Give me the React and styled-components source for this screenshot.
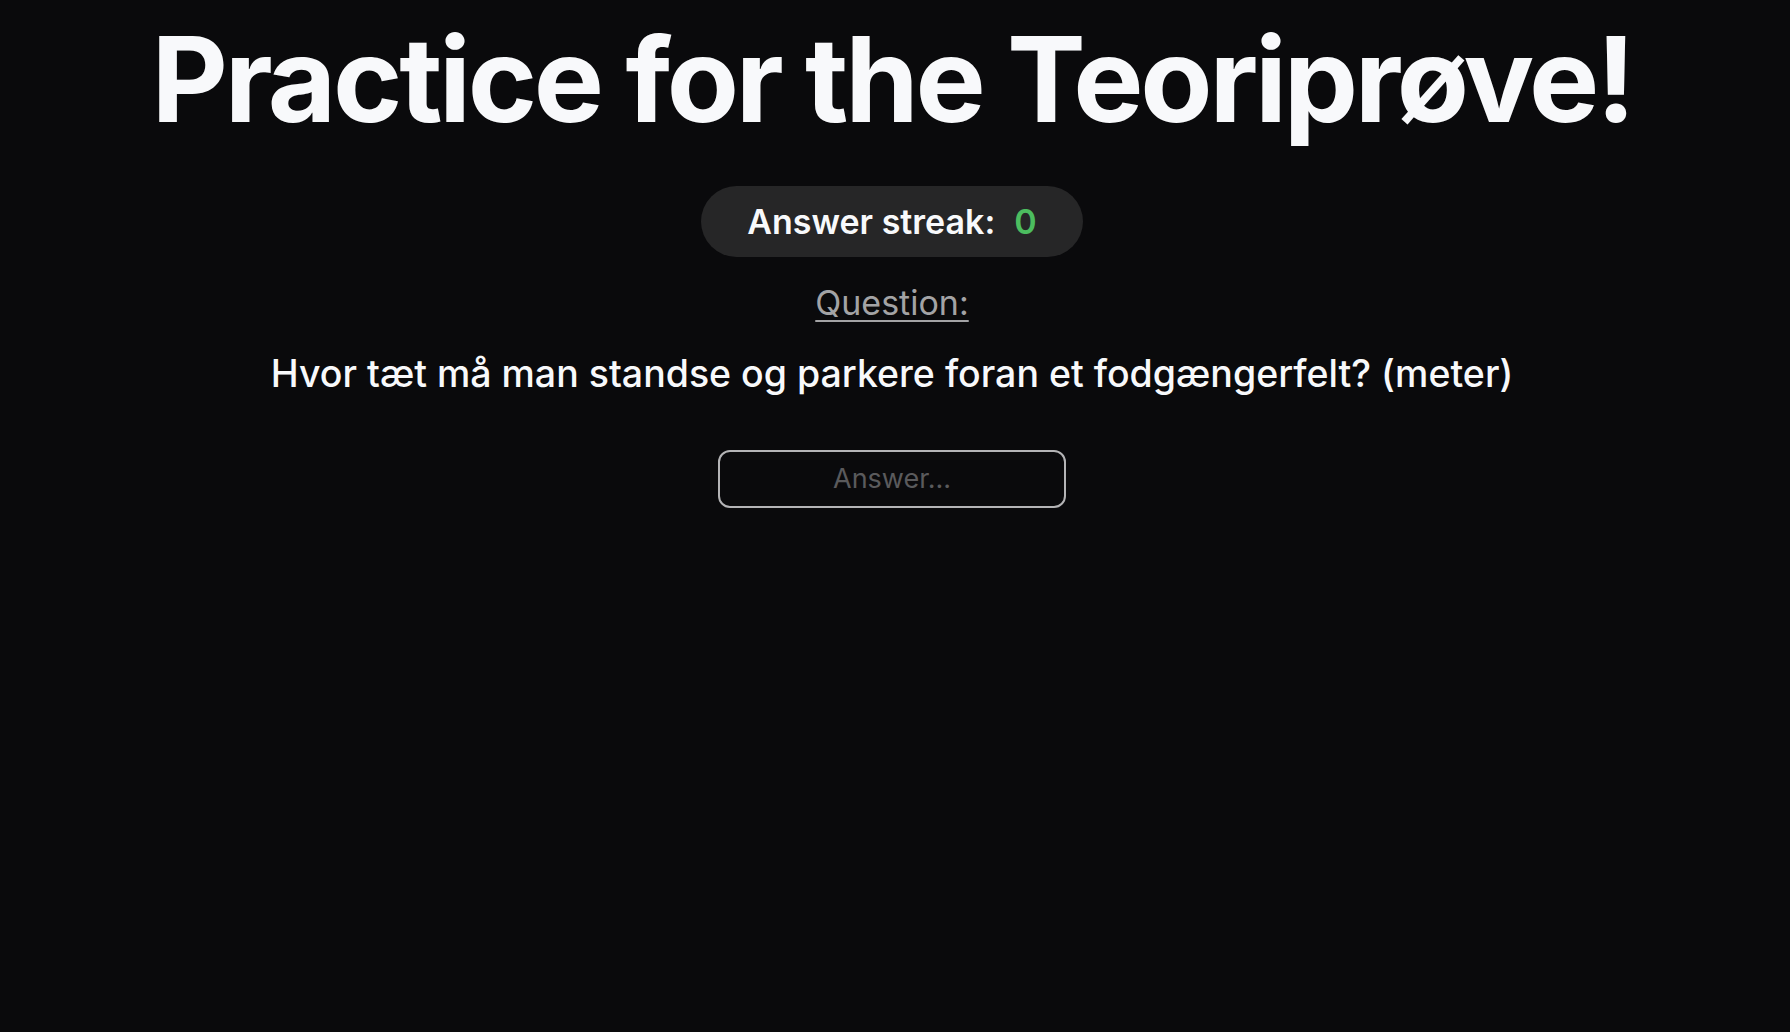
import React, { useState } from "react";
import styled, { createGlobalStyle } from "styled-components";

const GlobalStyle = createGlobalStyle`
  html, body {
    margin: 0;
    padding: 0;
    background: #0a0a0c;
  }
  body {
    font-family: Inter, "Noto Sans", "Liberation Sans", sans-serif;
    color: #f8f9fb;
    min-height: 100vh;
  }
`;

const Page = styled.main`
  display: flex;
  flex-direction: column;
  align-items: center;
  min-height: 100vh;
  padding: 9px 6px 0 0;
  box-sizing: border-box;
`;

const Title = styled.h1`
  margin: 0;
  font-size: 118px;
  font-weight: 700;
  line-height: 1.2;
  letter-spacing: -3.3px;
  color: #f8f9fb;
`;

const StreakPill = styled.div`
  display: flex;
  align-items: center;
  gap: 19px;
  margin-top: 35px;
  padding: 0 46px;
  height: 71px;
  border-radius: 36px;
  background: #262627;
  font-size: 34px;
  font-weight: 600;
`;

const Streak = styled.span`
  color: #4cbd5f;
`;

const Label = styled.h3`
  margin: 25px 0 0;
  font-size: 34px;
  font-weight: 400;
  color: #a3a3a5;
  text-decoration: underline;
  text-underline-offset: 5px;
  text-decoration-thickness: 2px;
`;

const Question = styled.p`
  margin: 28px 0 0;
  font-size: 37.5px;
  font-weight: 500;
  color: #f8f9fb;
`;

const AnswerInput = styled.input`
  margin-top: 54px;
  width: 348px;
  height: 58px;
  box-sizing: border-box;
  border: 2px solid #b4b4b6;
  border-radius: 12px;
  background: transparent;
  color: #f8f9fb;
  font-family: inherit;
  font-size: 27px;
  text-align: center;
  outline: none;

  &::placeholder {
    color: #5a5a5c;
  }
`;

const App = () => {
  const [answer, setAnswer] = useState("");
  const streak = 0;

  return (
    <>
      <GlobalStyle />
      <Page>
        <Title>Practice for the Teoriprøve!</Title>
        <StreakPill>
          <span>Answer streak:</span>
          <Streak>{streak}</Streak>
        </StreakPill>
        <Label>Question:</Label>
        <Question>
          Hvor tæt må man standse og parkere foran et fodgængerfelt? (meter)
        </Question>
        <AnswerInput
          placeholder="Answer..."
          value={answer}
          onChange={(e) => setAnswer(e.target.value)}
        />
      </Page>
    </>
  );
};

export default App;
